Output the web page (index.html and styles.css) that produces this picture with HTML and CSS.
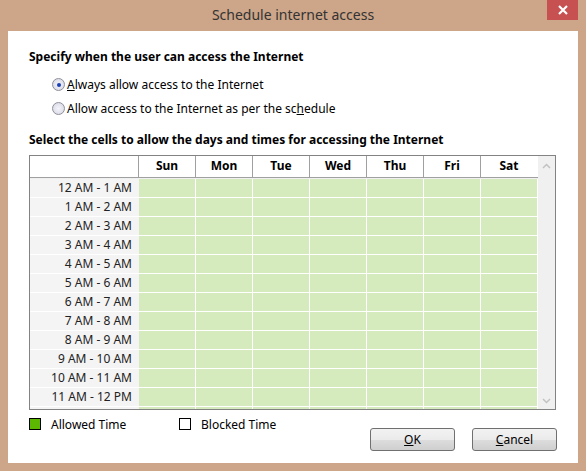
FILE: index.html
```html
<!DOCTYPE html>
<html>
<head>
<meta charset="utf-8">
<link rel="stylesheet" href="styles.css">
</head>
<body>
<div class="window">
  <div class="titlebar">
    <div class="title">Schedule internet access</div>
    <div class="close"><svg width="12" height="10" viewBox="0 0 12 10"><path d="M2 1 L10 9 M10 1 L2 9" stroke="#fff" stroke-width="2.2"/></svg></div>
  </div>
  <div class="client">
    <div class="heading">Specify when the user can access the Internet</div>
    <div class="radios">
      <label class="radio"><span class="dot checked"></span><span><u>A</u>lways allow access to the Internet</span></label>
      <label class="radio"><span class="dot"></span><span>Allow access to the Internet as per the sc<u>h</u>edule</span></label>
    </div>
    <div class="heading heading2">Select the cells to allow the days and times for accessing the Internet</div>
    <div class="grid">
      <div class="table">
        <div class="head">
          <div class="hcell corner"></div>
          <div class="hcell">Sun</div>
          <div class="hcell">Mon</div>
          <div class="hcell">Tue</div>
          <div class="hcell">Wed</div>
          <div class="hcell">Thu</div>
          <div class="hcell">Fri</div>
          <div class="hcell">Sat</div>
        </div>
        <div class="rows" id="rows"></div>
      </div>
      <div class="scrollbar">
        <svg class="arrow" width="9" height="6" viewBox="0 0 9 6"><path d="M1 5 L4.5 1.5 L8 5" fill="none" stroke="#c2c2c2" stroke-width="1.5"/></svg>
        <svg class="arrow" width="9" height="6" viewBox="0 0 9 6"><path d="M1 1 L4.5 4.5 L8 1" fill="none" stroke="#c2c2c2" stroke-width="1.5"/></svg>
      </div>
    </div>
    <div class="footer">
      <div class="legend">
        <div class="item first"><span class="box allowed"></span>Allowed Time</div>
        <div class="item"><span class="box blocked"></span>Blocked Time</div>
      </div>
      <div class="buttons">
        <button class="btn"><u>O</u>K</button>
        <button class="btn"><u>C</u>ancel</button>
      </div>
    </div>
  </div>
</div>
<script>
  var labels = ["12 AM - 1 AM","1 AM - 2 AM","2 AM - 3 AM","3 AM - 4 AM","4 AM - 5 AM","5 AM - 6 AM","6 AM - 7 AM","7 AM - 8 AM","8 AM - 9 AM","9 AM - 10 AM","10 AM - 11 AM","11 AM - 12 PM",""];
  var rows = document.getElementById('rows');
  labels.forEach(function (l) {
    var r = document.createElement('div');
    r.className = 'row';
    var lab = document.createElement('div');
    lab.className = 'label';
    lab.textContent = l;
    r.appendChild(lab);
    for (var i = 0; i < 7; i++) {
      var c = document.createElement('div');
      c.className = 'cell';
      r.appendChild(c);
    }
    rows.appendChild(r);
  });
</script>
</body>
</html>
```
FILE: styles.css
```css
html, body {
  margin: 0;
  padding: 0;
}
body {
  width: 586px;
  height: 471px;
  overflow: hidden;
  font-family: "Noto Sans", "Open Sans", sans-serif;
  font-size: 12px;
  color: #000;
}
.window {
  width: 586px;
  height: 471px;
  background: #cda588;
  display: flex;
  flex-direction: column;
}
.titlebar {
  height: 31px;
  position: relative;
  display: flex;
  justify-content: center;
}
.title {
  font-size: 14px;
  color: #333;
  line-height: 30px;
}
.close {
  position: absolute;
  right: 8px;
  top: 0;
  width: 31px;
  height: 20px;
  background: #c75050;
  display: flex;
  align-items: center;
  justify-content: center;
}
.client {
  margin: 0 8px;
  height: 432px;
  background: #fff;
  padding: 17px 0 0 21px;
  box-sizing: border-box;
}
.heading {
  font-weight: bold;
  line-height: 17px;
}
.radios {
  display: flex;
  flex-direction: column;
  gap: 7px;
  padding: 11px 0 0 23px;
}
.radio {
  display: flex;
  align-items: center;
  gap: 2px;
  line-height: 17px;
}
.radio u {
  text-decoration-thickness: 1px;
}
.dot {
  width: 11px;
  height: 11px;
  border: 1px solid #8e8f99;
  border-radius: 50%;
  background: radial-gradient(circle at 50% 50%, #f4f4fa 0%, #d5d6e3 100%);
  position: relative;
}
.dot.checked::after {
  content: "";
  position: absolute;
  left: 3.5px;
  top: 3.5px;
  width: 4px;
  height: 4px;
  border-radius: 50%;
  background: #1a3fb8;
}
.heading2 {
  margin-top: 14px;
}
.grid {
  margin-top: 7px;
  width: 527px;
  border: 1px solid #838383;
  display: flex;
  box-sizing: border-box;
  height: 255px;
}
.table {
  width: 508px;
  display: flex;
  flex-direction: column;
}
.head {
  display: flex;
  height: 22px;
  border-bottom: 1px solid #a0a0a0;
  box-sizing: border-box;
}
.hcell {
  width: 56px;
  border-left: 1px solid #a0a0a0;
  font-weight: bold;
  text-align: center;
  line-height: 20px;
}
.hcell.corner {
  width: 108px;
  border-left: none;
}
.rows {
  height: 231px;
  overflow: hidden;
  background: #f0f0f0;
  padding-top: 1px;
  box-sizing: border-box;
}
.row {
  display: flex;
  height: 19px;
}
.label {
  width: 109px;
  box-sizing: border-box;
  background: #f4f4f4;
  border-bottom: 1px solid #fff;
  text-align: right;
  padding-right: 7px;
  line-height: 18px;
  color: #222;
}
.cell {
  width: 57px;
  box-sizing: border-box;
  background: #d5eabd;
  border-right: 1px solid #fff;
  border-bottom: 1px solid #fff;
}
.scrollbar {
  width: 17px;
  background: #f0f0f0;
  display: flex;
  flex-direction: column;
  justify-content: space-between;
  align-items: center;
  padding: 7px 0 5px;
  box-sizing: border-box;
}
.footer {
  display: flex;
  justify-content: space-between;
  width: 528px;
  margin-top: 7px;
}
.legend {
  display: flex;
}
.item {
  display: flex;
  align-items: flex-start;
  gap: 10px;
  line-height: 15px;
  white-space: nowrap;
}
.item.first {
  width: 150px;
}
.box {
  width: 10px;
  height: 10px;
  border: 1px solid #000;
  margin-top: 1px;
}
.box.allowed {
  background: #5cb800;
}
.box.blocked {
  background: #fff;
}
.buttons {
  display: flex;
  gap: 17px;
  padding-top: 11px;
}
.btn {
  width: 85px;
  height: 23px;
  border: 1px solid #707070;
  border-radius: 3px;
  background: linear-gradient(#f2f2f2 0%, #ebebeb 50%, #dddddd 51%, #cfcfcf 100%);
  font-family: inherit;
  font-size: 12px;
  color: #000;
  padding: 0;
}
```
